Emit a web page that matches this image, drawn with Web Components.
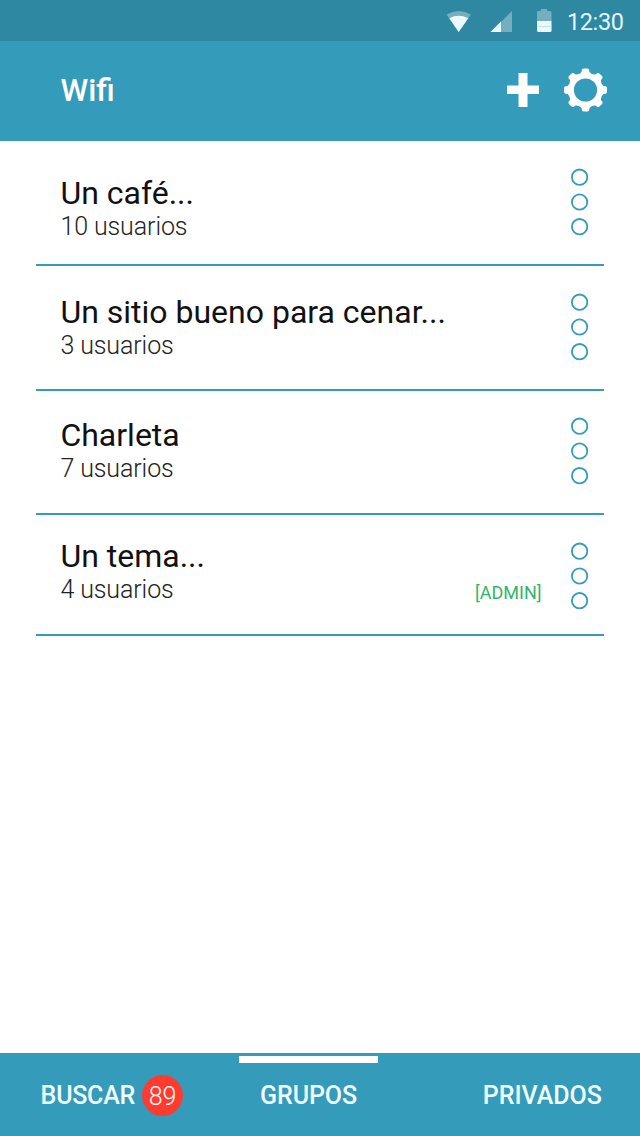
<!DOCTYPE html>
<html lang="es">
<head>
<meta charset="utf-8">
<title>Wifi</title>
<style>
html,body{margin:0;height:100%}
body{font-family:Roboto,"Liberation Sans",sans-serif;background:#fff;overflow:hidden}
</style>
</head>
<body>
<chat-app></chat-app>
<script>
function define(name, html, setup) {
  const template = document.createElement('template');
  template.innerHTML = html;
  customElements.define(name, class extends HTMLElement {
    connectedCallback() {
      if (this.shadowRoot) return;
      this.attachShadow({mode: 'open'}).append(template.content.cloneNode(true));
      if (setup) setup(this, this.shadowRoot);
    }
  });
}

define('status-bar', `<style>
:host{display:flex;height:41px;background:#2e88a1;color:#e4f6fa;align-items:center;justify-content:flex-end;box-sizing:border-box;padding-right:16px}
svg{display:block;height:41px;flex:none}
time{font-size:23.5px;line-height:28px;padding-top:3px;letter-spacing:-.4px;width:57px;white-space:nowrap}
</style>
<svg width="127" height="41" viewBox="440 0 127 41">
<path d="M446.500 14.500Q458.700 7.500 471 14.500L458.700 32Z" fill="#74afc0"/>
<path d="M449.300 18.200Q458.700 13.500 468.200 18.200L458.700 32Z" fill="#ecfafc"/>
<path d="M512 11V32H491Z" fill="#74afc0"/>
<path d="M501 21.500V32H490.500Z" fill="#ecfafc"/>
<path d="M537 12.500Q537 11 538.500 11H541V9H547V11H550Q551.500 11 551.500 12.500V21H537Z" fill="#74afc0"/>
<path d="M537 21H551.500V30.500Q551.500 32 550 32H538.500Q537 32 537 30.500Z" fill="#ecfafc"/>
<path d="M537 26.500H551.500" stroke="#c9dfe5" stroke-width="1"/>
</svg><time>12:30</time>`);

define('app-header', `<style>
:host{display:flex;height:100px;background:#349bba;color:#fff;align-items:center;box-sizing:border-box;padding:0 32.500px 0 60.500px}
h1{font-size:31.500px;font-weight:500;line-height:38px;margin:0;flex:1}
.plus{width:32px;height:34px;margin-right:25px}
.gear{width:44px;height:44px}
svg{display:block;margin-bottom:3px}
</style>
<h1><slot></slot></h1>
<svg class="plus" viewBox="0 0 32 34"><path d="M11.500 0H20.500V12.500H32V21H20.500V34H11.500V21H0V12.500H11.500Z" fill="#fff"/></svg>
<svg class="gear" viewBox="-21.500 -22 44 44"><path fill="#fff" fill-rule="evenodd"/></svg>`, (host, root) => {
  // Eight rounded teeth joined by shallow curved valleys.
  const point = (radius, degrees) => {
    const a = degrees * Math.PI / 180;
    return (radius * Math.cos(a)).toFixed(2) + ' ' + (radius * Math.sin(a)).toFixed(2);
  };
  let d = '';
  for (let i = 0; i < 8; i++) {
    const a = i * 45;
    d += (i ? 'L' : 'M') + point(18.4, a - 12.5) + 'L' + point(20.3, a - 10.5)
      + 'Q' + point(21.6, a - 9) + ' ' + point(21.6, a - 5)
      + 'L' + point(21.6, a + 5) + 'Q' + point(21.6, a + 9) + ' ' + point(20.3, a + 10.5)
      + 'L' + point(18.4, a + 12.5) + 'Q' + point(16.3, a + 22.5) + ' ' + point(18.4, a + 32.5);
  }
  d += 'ZM-11.600 0A11.600 11.600 0 1 0 11.600 0A11.600 11.600 0 1 0 -11.600 0Z';
  root.querySelector('.gear path').setAttribute('d', d);
});

define('dots-menu', `<style>
:host{display:block}
svg{display:block}
</style>
<svg width="18" height="68" viewBox="0 0 18 68" fill="none" stroke="#349bba" stroke-width="1.8"><circle cx="8.600" cy="9.200" r="7.700"/><circle cx="8.600" cy="34" r="7.700"/><circle cx="8.600" cy="58.700" r="7.700"/></svg>`);

define('group-row', `<style>
:host{display:flex;box-sizing:border-box;margin:0 36px;padding:0 15px 0 24.400px;border-bottom:2px solid #349bba;color:#111}
.text{flex:1;padding-top:var(--text-top)}
.title{font-size:32px;line-height:36px}
.users{font-size:25px;font-weight:300;line-height:32px;letter-spacing:-.1px;color:#222}
.tag{font-size:18px;line-height:22px;color:#2fb56e;padding-top:67px;margin-right:29.400px}
dots-menu{padding-top:var(--dots-top)}
</style>
<div class="text"><div class="title"><slot name="title"></slot></div><div class="users"><slot></slot></div></div>
<div class="tag"><slot name="tag"></slot></div>
<dots-menu></dots-menu>`);

define('bottom-tab', `<style>
:host{display:flex;align-items:center;position:relative;box-sizing:border-box;font-size:25px;font-weight:500;line-height:30px;letter-spacing:var(--spacing,0);color:#f2fdff;height:83px;padding-top:2px}
:host([active])::before{content:"";position:absolute;top:3px;left:0;width:139px;height:7px;background:#fff}
</style><span><slot></slot></span><slot name="badge"></slot>`);

define('count-badge', `<style>
:host{display:flex;align-items:center;justify-content:center;width:41px;height:41px;border-radius:50%;background:#ff3b30;color:#fff;font-size:25px;font-weight:300;letter-spacing:0;margin-left:7px;box-sizing:border-box;padding-top:2px}
</style><slot></slot>`);

define('bottom-tabs', `<style>
:host{display:grid;grid-template-columns:239px 139px 1fr;height:83px;background:#349bba}
</style><slot></slot>`);

define('chat-app', `<style>
:host{display:flex;flex-direction:column;width:640px;height:1136px;background:#fff}
main{flex:1}
.r1{height:125px;--text-top:34px;--dots-top:27px}
.r2{height:125px;--text-top:28px;--dots-top:26.500px}
.r3{height:124px;--text-top:26px;--dots-top:26px}
.r4{height:121px;--text-top:23px;--dots-top:26.500px}
.search{padding-left:40.600px;--spacing:-.25px}
.groups{justify-content:center;--spacing:-.1px}
.private{justify-content:flex-end;padding-right:38px}
</style>
<status-bar></status-bar>
<app-header>Wifi</app-header>
<main>
<group-row class="r1"><span slot="title">Un café...</span>10 usuarios</group-row>
<group-row class="r2"><span slot="title">Un sitio bueno para cenar...</span>3 usuarios</group-row>
<group-row class="r3"><span slot="title">Charleta</span>7 usuarios</group-row>
<group-row class="r4"><span slot="title">Un tema...</span>4 usuarios<span slot="tag">[ADMIN]</span></group-row>
</main>
<bottom-tabs>
<bottom-tab class="search">BUSCAR<count-badge slot="badge">89</count-badge></bottom-tab>
<bottom-tab class="groups" active>GRUPOS</bottom-tab>
<bottom-tab class="private">PRIVADOS</bottom-tab>
</bottom-tabs>`);
</script>
</body>
</html>
